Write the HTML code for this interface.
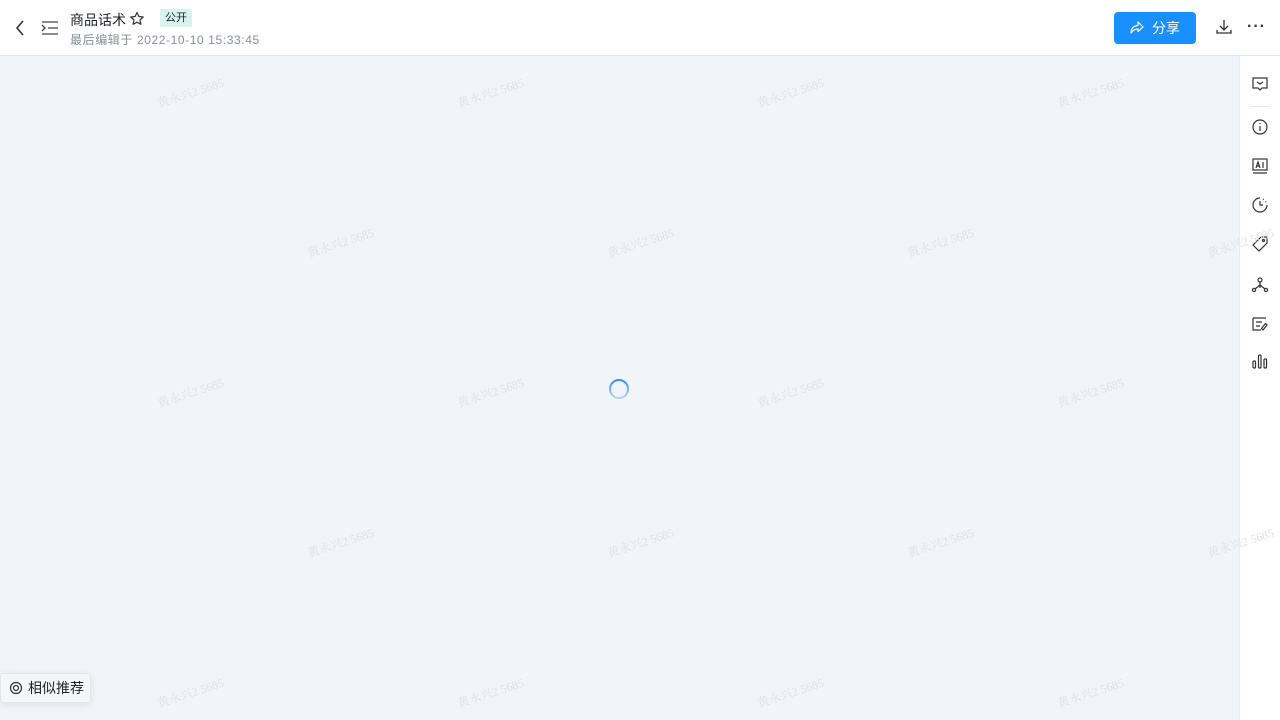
<!DOCTYPE html>
<html><head><meta charset="utf-8"><style>
*{margin:0;padding:0;box-sizing:border-box}
body{width:1280px;height:720px;overflow:hidden;background:#f1f4f8;font-family:"Liberation Sans","Noto Sans CJK SC",sans-serif;position:relative}
.top{position:absolute;left:0;top:0;width:1280px;height:56px;background:#fff;border-bottom:1px solid #e4e6ea}
.side{position:absolute;left:1239px;top:56px;width:41px;height:664px;background:#fff;border-left:1px solid #e8eaed}
.wm{position:absolute;font-family:"Liberation Serif","Noto Serif CJK SC",serif;font-size:12px;color:#dde1e7;transform:rotate(-18deg);white-space:nowrap}
.ic{position:absolute;left:1251px}
</style></head><body>
<div class="top">
<svg style="position:absolute;left:14px;top:20px" width="12" height="16" viewBox="0 0 12 16"><path d="M9 1L3 8l6 7" fill="none" stroke="#333" stroke-width="1.6"/></svg>
<svg style="position:absolute;left:41px;top:20px" width="18" height="16" viewBox="0 0 18 16"><path d="M1 2h16M7 8h10M1 14h16M1 5l3 3-3 3" fill="none" stroke="#444" stroke-width="1.3"/></svg>
<div style="position:absolute;left:70px;top:10px;font-size:14px;color:#1f2329">商品话术</div>
<svg style="position:absolute;left:129px;top:11px" width="16" height="16" viewBox="0 0 16 16"><path d="M8 1.5l1.9 4 4.3.5-3.2 3 .9 4.3L8 11.2 4.1 13.3 5 9 1.8 6l4.3-.5z" fill="none" stroke="#333" stroke-width="1.2" stroke-linejoin="round"/></svg>
<div style="position:absolute;left:160px;top:9px;height:18px;padding:0 5px;background:#d9f2ee;color:#1f2329;font-size:11px;line-height:18px;border-radius:2px">公开</div>
<div style="position:absolute;left:70px;top:31px;font-size:12px;color:#8a8f99;letter-spacing:0.6px">最后编辑于 2022-10-10 15:33:45</div>
<div style="position:absolute;left:1114px;top:12px;width:82px;height:32px;background:#1890ff;border-radius:4px;color:#fff;font-size:14px;line-height:32px;padding-left:38px">分享</div>
<svg style="position:absolute;left:1129px;top:20px" width="16" height="16" viewBox="0 0 16 16"><path d="M9 2l5 5-5 4.5V9C6 9 4 10 2 13c0-4 2-7 7-7.5z" fill="none" stroke="#fff" stroke-width="1.2" stroke-linejoin="round"/></svg>
<svg style="position:absolute;left:1215px;top:19px" width="18" height="16" viewBox="0 0 18 16"><path d="M9 1v10M5 7l4 4 4-4M2 11v3h14v-3" fill="none" stroke="#333" stroke-width="1.3"/></svg>
<div style="position:absolute;left:1247px;top:18px;font-size:16px;color:#333;letter-spacing:1px;font-weight:bold">···</div>
</div>
<div class="side">
<div style="position:absolute;left:11px;top:50px;width:18px;border-top:1px solid #e4e6ea"></div>
</div>
<svg class="ic" style="top:75px" width="18" height="18" viewBox="0 0 18 18" fill="none" stroke="#333" stroke-width="1.2"><path d="M2 3h14v10h-5l-2 2-2-2H2z M6 7l3 2 3-2"/></svg>
<svg class="ic" style="top:118px" width="18" height="18" viewBox="0 0 18 18" fill="none" stroke="#333" stroke-width="1.2"><circle cx="9" cy="9" r="7"/><path d="M9 8v5M9 5v1"/></svg>
<svg class="ic" style="top:157px" width="18" height="18" viewBox="0 0 18 18" fill="none" stroke="#333" stroke-width="1.2"><rect x="2" y="2" width="14" height="11"/><path d="M2 16h14M5 11l2-6 2 6M6 9h2M12 5v6"/></svg>
<svg class="ic" style="top:196px" width="18" height="18" viewBox="0 0 18 18" fill="none" stroke="#333" stroke-width="1.2"><path d="M9 2a7 7 0 1 0 7 7" /><path d="M9 5v4l3 0" /><path d="M12 3l1 .6M14.5 5.5l.6 1" stroke-dasharray="1 2"/></svg>
<svg class="ic" style="top:235px" width="18" height="18" viewBox="0 0 18 18" fill="none" stroke="#333" stroke-width="1.2"><path d="M10 2h6v6l-8 8-6-6z"/><circle cx="12.5" cy="5.5" r="1"/></svg>
<svg class="ic" style="top:276px" width="18" height="18" viewBox="0 0 18 18" fill="none" stroke="#333" stroke-width="1.2"><circle cx="9" cy="4" r="2"/><circle cx="3" cy="14" r="1.6"/><circle cx="15" cy="14" r="1.6"/><path d="M9 6v3l-5 4M9 9l5 4M8 11h2"/></svg>
<svg class="ic" style="top:315px" width="18" height="18" viewBox="0 0 18 18" fill="none" stroke="#333" stroke-width="1.2"><path d="M2 3h13M2 3v12h8M5 7h6M5 11h4M2 15h8M12 15l4-5-1.5-1.5-4 5z"/></svg>
<svg class="ic" style="top:352px" width="18" height="18" viewBox="0 0 18 18" fill="none" stroke="#333" stroke-width="1.2"><rect x="2" y="9" width="2.5" height="7" rx="1"/><rect x="7.5" y="3" width="2.5" height="13" rx="1"/><rect x="13" y="7" width="2.5" height="9" rx="1"/></svg>
<svg style="position:absolute;left:608px;top:378px" width="22" height="22" viewBox="0 0 22 22"><defs><linearGradient id="g" x1="0" y1="0" x2="0" y2="1"><stop offset="0" stop-color="#3a8df5"/><stop offset="1" stop-color="#b9d8fb"/></linearGradient></defs><circle cx="11" cy="11" r="9" fill="none" stroke="url(#g)" stroke-width="2"/></svg>
<div style="position:absolute;left:0;top:673px;width:91px;height:30px;background:#f4f6f9;border:1px solid #e2e5ea;border-radius:3px;box-shadow:0 2px 8px rgba(0,0,0,.08);font-size:14px;color:#1f2329;line-height:28px;padding-left:27px">相似推荐</div>
<svg style="position:absolute;left:9px;top:681px" width="14" height="14" viewBox="0 0 14 14" fill="none" stroke="#333" stroke-width="1.2"><circle cx="7" cy="7" r="5.5"/><circle cx="7" cy="7" r="2.5"/></svg>
<div class="wm" style="left:156px;top:84px">黄永兴2 5685</div>
<div class="wm" style="left:456px;top:84px">黄永兴2 5685</div>
<div class="wm" style="left:756px;top:84px">黄永兴2 5685</div>
<div class="wm" style="left:1056px;top:84px">黄永兴2 5685</div>
<div class="wm" style="left:306px;top:234px">黄永兴2 5685</div>
<div class="wm" style="left:606px;top:234px">黄永兴2 5685</div>
<div class="wm" style="left:906px;top:234px">黄永兴2 5685</div>
<div class="wm" style="left:1206px;top:234px">黄永兴2 5685</div>
<div class="wm" style="left:156px;top:384px">黄永兴2 5685</div>
<div class="wm" style="left:456px;top:384px">黄永兴2 5685</div>
<div class="wm" style="left:756px;top:384px">黄永兴2 5685</div>
<div class="wm" style="left:1056px;top:384px">黄永兴2 5685</div>
<div class="wm" style="left:306px;top:534px">黄永兴2 5685</div>
<div class="wm" style="left:606px;top:534px">黄永兴2 5685</div>
<div class="wm" style="left:906px;top:534px">黄永兴2 5685</div>
<div class="wm" style="left:1206px;top:534px">黄永兴2 5685</div>
<div class="wm" style="left:156px;top:684px">黄永兴2 5685</div>
<div class="wm" style="left:456px;top:684px">黄永兴2 5685</div>
<div class="wm" style="left:756px;top:684px">黄永兴2 5685</div>
<div class="wm" style="left:1056px;top:684px">黄永兴2 5685</div>
</body></html>
